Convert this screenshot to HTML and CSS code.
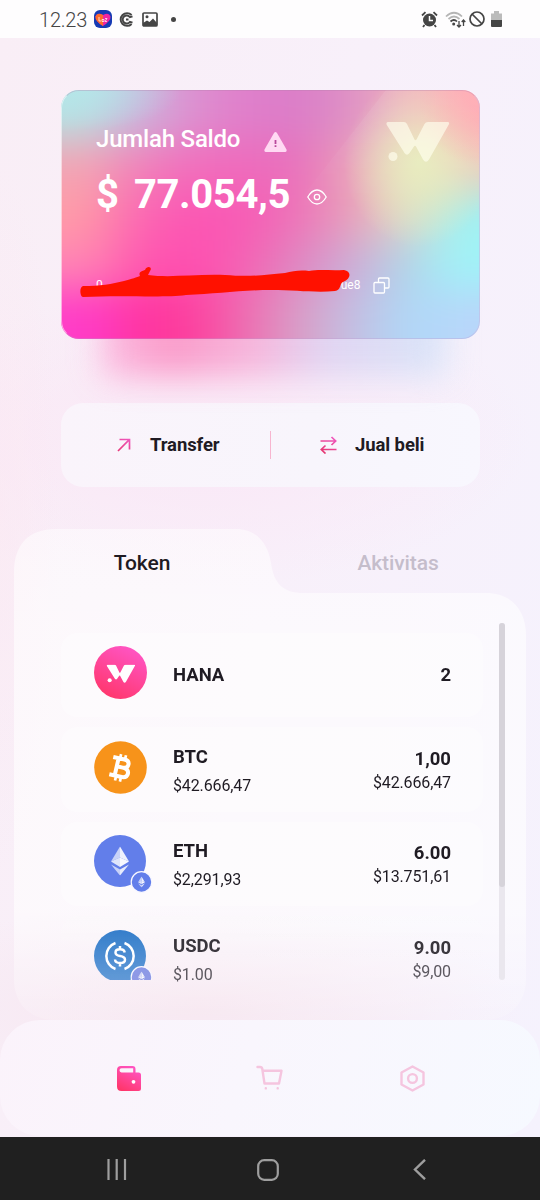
FILE: index.html
```html
<!DOCTYPE html>
<html lang="id">
<head>
<meta charset="utf-8">
<title>Wallet</title>
<link rel="stylesheet" href="styles.css">
</head>
<body>
<svg class="defs" width="0" height="0">
  <defs>
    <linearGradient id="pink" x1="0.7" y1="0" x2="0.2" y2="1"><stop offset="0" stop-color="#ff55c5"/><stop offset="1" stop-color="#ff3568"/></linearGradient>
    <linearGradient id="swap" gradientUnits="userSpaceOnUse" x1="14" y1="0" x2="4" y2="18"><stop offset="0" stop-color="#f05bc5"/><stop offset="1" stop-color="#e5336c"/></linearGradient>
    <linearGradient id="usdc" x1="0" y1="0" x2="0" y2="1"><stop offset="0" stop-color="#2f7ac9"/><stop offset="1" stop-color="#4b8dd2"/></linearGradient>
    <symbol id="mark" viewBox="0 0 64 40">
      <path d="M2.500 0H18Q20 0 21 2L28.500 17.500Q29.500 19 30.500 17.500L38.500 2Q39.500 0 42 0H61.500Q64 0 62.800 2.500L43 37.500Q40 42 37 37.500L30 24.500Q29 23 28 24.500L23.500 31Q21 34.500 18.500 31L.8 3Q-.5 0 2.500 0Z"/>
      <circle cx="7" cy="34.500" r="4.500"/>
    </symbol>
    <symbol id="ether" viewBox="0 0 18 29">
      <path fill="#fff" opacity=".65" d="M9 0V11L0 15Z"/><path fill="#fff" opacity=".9" d="M9 0V11L18 15Z"/>
      <path fill="#fff" opacity=".8" d="M9 11V20.500L0 15Z"/><path fill="#fff" opacity=".95" d="M9 11V20.500L18 15Z"/>
      <path fill="#fff" opacity=".65" d="M0 18L9 23V29Z"/><path fill="#fff" opacity=".85" d="M18 18L9 23V29Z"/>
    </symbol>
  </defs>
</svg>
<div class="phone">
  <header class="status">
    <span class="clock">12.23</span>
    <svg class="laz" width="18" height="18" viewBox="0 0 18 18"><rect width="18" height="18" rx="6" fill="#173bb4"/><path d="M9 16Q1 11 1.500 6.500Q3 2 9 5Q15 2 16.500 6.500Q17 11 9 16Z" fill="#f026a0"/><path d="M9 16Q1 11 1.500 6.500Q3 2 9 5Z" fill="#ff6a2a"/><path d="M5 7v4h2M8 9.500h2v2H8zM11 8.500h2l-2 3h2" fill="none" stroke="#fff" stroke-width=".7"/></svg>
    <svg class="cc" width="15" height="15" viewBox="0 0 15 15" fill="none" stroke="#454545" stroke-width="1.900"><path d="M13.500 4.300L11 5.200A4 4 0 1 0 11 9.800L13.500 10.700M12.600 3A6.400 6.400 0 1 0 12.600 12M7 7.500H9.500"/></svg>
    <svg class="pic" width="16" height="15" viewBox="0 0 16 15"><rect x="1" y="1" width="14" height="13" rx="1" fill="none" stroke="#454545" stroke-width="1.700"/><path d="M1 11L5 8.500L7.500 10L11 6.500L15 11V14H1Z" fill="#454545"/><circle cx="5" cy="4.800" r="1.500" fill="#454545"/></svg>
    <i class="dot"></i>
    <span class="spacer"></span>
    <svg width="17" height="17" viewBox="0 0 17 17"><circle cx="8.500" cy="9" r="6.500" fill="#454545"/><path d="M1 4.500L4.500 1.200M16 4.500L12.500 1.200M3.500 14L2 16M13.500 14L15 16" stroke="#454545" stroke-width="1.800"/><path d="M8.500 5V9.500H12" fill="none" stroke="#fff" stroke-width="1.500"/></svg>
    <svg class="wifi" width="21" height="17" viewBox="0 0 21 17" fill="none"><path d="M1 5.500Q9 -2 17 5.500M3.500 8Q9 3 14.500 8" stroke="#b5b5b5" stroke-width="1.700"/><path d="M5.500 10.500Q9 7.500 12 10.500" stroke="#454545" stroke-width="1.700"/><circle cx="8.700" cy="13" r="1.500" fill="#454545"/><path d="M14 10V16M12 14L14 16L16 14M18.500 15V9M16.700 11L18.500 9L20.300 11" stroke="#454545" stroke-width="1.300"/></svg>
    <svg class="block" width="16" height="16" viewBox="0 0 16 16" fill="none" stroke="#454545" stroke-width="1.700"><circle cx="8" cy="8" r="7"/><path d="M3 3L13 13"/></svg>
    <svg class="batt" width="11" height="17" viewBox="0 0 11 17"><path d="M0 2.500H3V0H8V2.500H11V9H0Z" fill="#bbb"/><path d="M0 9H11V15Q11 16 10 16H1Q0 16 0 15Z" fill="#454545"/></svg>
  </header>

  <main class="app">
    <section class="card-wrap">
      <div class="card-glow"></div>
      <div class="card">
        <div class="mesh"></div>
        <div class="tint"></div>
        <div class="shine"></div>
        <div class="card-body">
          <div class="card-head">
            <span class="label">Jumlah Saldo</span>
            <svg class="warn" width="23" height="20" viewBox="0 0 23 20"><path d="M10 1Q11.500 -1 13 1L22.500 17.500Q23 20 21 20H2Q0 20 .5 17.500Z" fill="#ffd9f3"/><path d="M11.500 8V12M11.500 13.300V15" stroke="#b8489c" stroke-width="1.800"/></svg>
            <svg class="brand" width="64" height="40"><use href="#mark"/></svg>
          </div>
          <div class="amount"><span class="cur">$</span><span class="num">77.054,5</span>
            <svg width="20" height="16" viewBox="0 0 20 16" fill="none" stroke="#fff" stroke-width="1.300"><path d="M.8 8Q4.800 1 10 1T19.200 8Q15.200 15 10 15T.8 8Z"/><circle cx="10" cy="8" r="2.700"/></svg>
          </div>
          <div class="address"><span>0</span><span class="tail">ue8</span>
            <svg width="17" height="17" viewBox="0 0 17 17" fill="none" stroke="#fff" stroke-width="1.300"><path d="M5.500 5.500V2Q5.500 1 6.500 1H15Q16 1 16 2V10Q16 11 15 11H11.500"/><rect x="1" y="5.500" width="10.500" height="10.500" rx="1"/></svg>
          </div>
        </div>
        <svg class="scribble" width="272" height="34" viewBox="0 0 272 34"><path fill="#ff1100" d="M3 20C20 20 32 18 44 15C52 13 57 11 60 10C58 6 62 5 65 4C67-1 73 1 70 5L68 9C90 12 115 8 145 9C170 11 185 9 205 7C213 5 220 4 229 5C240 3 250 5 264 4C271 5 272 12 263 16C260 16 261 25 255 25C236 27 216 24 191 24C161 24 136 28 106 29C84 32 44 29 3 31C0 31-1 21 3 20Z"/></svg>
      </div>
    </section>

    <section class="actions">
      <div class="action transfer">
        <svg width="14" height="14" viewBox="0 0 14 14" fill="none" stroke="url(#swap)" stroke-width="1.700"><path d="M1 13L12.300 1.700M2.500 1.500H12.500V11.500"/></svg>
        <span>Transfer</span>
      </div>
      <i class="divider"></i>
      <div class="action trade">
        <svg width="17" height="18" viewBox="0 0 17 18" fill="none" stroke="url(#swap)" stroke-width="1.700"><path d="M.5 5H15.500M11.500 1L15.700 5L11.500 9M16.500 13.500H1.500M5.500 9.500L1.300 13.500L5.500 17.500"/></svg>
        <span>Jual beli</span>
      </div>
    </section>

    <section class="panel">
      <svg class="panel-bg" width="512" height="491" viewBox="0 0 512 491">
        <defs><linearGradient id="pg" x1="0" y1="0" x2="0" y2="1"><stop offset="0" stop-color="#fff" stop-opacity=".5"/><stop offset=".2" stop-color="#fff" stop-opacity=".6"/><stop offset=".78" stop-color="#fff" stop-opacity=".6"/><stop offset="1" stop-color="#fff" stop-opacity=".12"/></linearGradient></defs>
        <path fill="url(#pg)" d="M0 44C0 16 14 0 42 0H222C242 0 254 14 257 34C260 54 268 64 290 64H472C498 64 512 82 512 106V450C512 475 495 491 470 491H42C16 491 0 475 0 450Z"/>
      </svg>
      <nav class="tabs"><span class="tab on">Token</span><span class="tab">Aktivitas</span></nav>
      <div class="list-area">
        <div class="list">
          <article class="row">
            <div class="coin"><svg width="53" height="53" viewBox="0 0 53 53"><circle cx="26.500" cy="26.500" r="26.500" fill="url(#pink)"/><use href="#mark" x="12.500" y="18.500" width="29" height="18.500" fill="#fff"/></svg></div>
            <div class="info single"><b>HANA</b></div>
            <div class="hold single"><b>2</b></div>
          </article>
          <article class="row">
            <div class="coin"><svg width="53" height="53" viewBox="0 0 53 53"><circle cx="26.500" cy="26.500" r="26.300" fill="#f7931a"/><g transform="rotate(13 27 27)" fill="none" stroke="#fff"><path stroke-width="4" d="M17 18H28.500Q33.500 18 33.500 22Q33.500 26.300 28.500 26.300H22.500M28.500 26.300Q35 26.300 35 31Q35 35.700 28.500 35.700H17M22.500 18V35.700"/><path stroke-width="2.700" d="M24 13.500V18M29 13.500V18M24 35.500V40.500M29 35.500V40.500"/></g></svg></div>
            <div class="info"><b>BTC</b><span>$42.666,47</span></div>
            <div class="hold"><b>1,00</b><span>$42.666,47</span></div>
          </article>
          <article class="row">
            <div class="coin"><svg width="58" height="58" viewBox="0 0 58 58"><circle cx="26" cy="26" r="26" fill="#627eea"/><use href="#ether" x="17" y="11.500" width="18" height="29"/><circle cx="47.500" cy="47" r="10.300" fill="#627eea" stroke="#f8f7ff" stroke-width="1.200"/><use href="#ether" x="44" y="41.500" width="7" height="11"/></svg></div>
            <div class="info"><b>ETH</b><span>$2,291,93</span></div>
            <div class="hold"><b>6.00</b><span>$13.751,61</span></div>
          </article>
          <article class="row last">
            <div class="coin"><svg width="58" height="50" viewBox="0 0 58 50"><circle cx="26" cy="26" r="26" fill="url(#usdc)"/><g fill="none" stroke="#fff" stroke-width="2.500"><path d="M21.500 13A13.800 13.800 0 0 0 21.500 39M30.500 13A13.800 13.800 0 0 1 30.500 39"/><path d="M30.700 22.500Q30.300 19.300 26 19.300Q21.500 19.300 21.500 22.500Q21.500 25.300 26 26Q31 26.700 31 29.700Q31 33 26 33Q21.300 33 21 29.500M26 16V19.500M26 33V36.500"/></g><circle cx="47.500" cy="47" r="10.300" fill="#7f8de4" stroke="#f8f7ff" stroke-width="1.200"/><use href="#ether" x="44" y="41.500" width="7" height="11"/></svg></div>
            <div class="info"><b>USDC</b><span>$1.00</span></div>
            <div class="hold"><b>9.00</b><span>$9,00</span></div>
          </article>
        </div>
        <div class="scroll"><i></i></div>
      </div>
    </section>

    <nav class="bottom">
      <svg width="24" height="25" viewBox="0 0 24 25"><path fill="url(#pink)" fill-rule="evenodd" d="M4 0H15.500Q18.500 0 18.500 3V6.500H21.500Q24 6.500 24 9V22.500Q24 25 21.500 25H4.500Q0 25 0 20.500V4Q0 0 4 0ZM4.500 2.200Q2.500 2.200 2.500 4.300T4.500 6.500H16.200V2.200Z"/><circle cx="16.500" cy="15.800" r="1.900" fill="#fff"/></svg>
      <svg width="27" height="26" viewBox="0 0 27 26" fill="none" stroke="#f5c5df" stroke-width="2.400" stroke-linejoin="round" stroke-linecap="round"><path d="M1.500 2H4Q6 2 6.300 4L8.500 18.500H23L25.500 5.700H7"/><path d="M9.800 23.300V23.400M21.700 23.300V23.400"/></svg>
      <svg width="25" height="27" viewBox="0 0 25 27" fill="none" stroke="#f5c5df" stroke-width="2.400" stroke-linejoin="round"><path d="M12.500 1.500L23.500 7.500V19.500L12.500 25.500L1.500 19.500V7.500Z"/><circle cx="12.500" cy="13.500" r="4.400"/></svg>
    </nav>
  </main>

  <footer class="system">
    <svg width="20" height="21" viewBox="0 0 20 21" stroke="#9e9e9e" stroke-width="2.200"><path d="M1.500 0V21M9.700 0V21M18 0V21"/></svg>
    <svg width="22" height="22" viewBox="0 0 22 22" fill="none" stroke="#9e9e9e" stroke-width="2.200"><rect x="1.200" y="1.200" width="19.600" height="19.600" rx="6"/></svg>
    <svg width="13" height="21" viewBox="0 0 13 21" fill="none" stroke="#9e9e9e" stroke-width="2.400"><path d="M12 .8L2 10.500L12 20.200"/></svg>
  </footer>
</div>
</body>
</html>
```
FILE: styles.css
```css
* { box-sizing: border-box; }
body { margin: 0; font-family: Roboto, "Liberation Sans", sans-serif; color: #1f1b23; }
svg { display: block; flex: none; }
.defs { position: absolute; }
.phone { width: 540px; height: 1200px; display: flex; flex-direction: column; overflow: hidden; }

.status { height: 38px; background: #fefdfe; display: flex; align-items: center; padding: 0 38px 0 39px; flex: none; color: #454545; }
.clock { font-size: 20px; width: 55px; letter-spacing: -.2px; font-weight: 350; padding-top: 1px; }
.cc { margin-left: 7px; }
.pic { margin-left: 8px; }
.dot { width: 5px; height: 5px; border-radius: 50%; background: #454545; margin-left: 13px; }
.spacer { flex: 1; }
.wifi { margin-left: 7px; }
.block { margin-left: 3px; }
.batt { margin-left: 6px; }

.app {
  height: 1099px; flex: none; display: flex; flex-direction: column; padding-top: 52px;
  background:
    radial-gradient(ellipse 60px 350px at 0 480px, #fce7f180, #fce7f100),
    radial-gradient(ellipse 320px 110px at 200px 970px, #f6e5ef, #f6e5ef00),
    radial-gradient(ellipse 330px 150px at 200px 400px, #fae7f6, #fae7f600),
    linear-gradient(100deg, #f9eef6 0%, #f8f0fa 50%, #f5f2fd 100%);
}

.card-wrap { position: relative; width: 419px; height: 249px; margin-left: 61px; flex: none; }
.card-glow {
  position: absolute; left: 40px; right: 34px; top: 195px; height: 92px; filter: blur(16px); opacity: .75;
  background: linear-gradient(90deg, #fcb0dc, #fb80ba 20%, #f5a5d3 45%, #d9cdf0 65%, #cfe2f8);
}
.card { position: relative; width: 100%; height: 100%; border-radius: 18px; overflow: hidden; }
.card::after { content: ""; position: absolute; inset: 0; border-radius: 18px; border: 1.5px solid; border-color: #b580ad55 #c9b6df88 #bd9bd055 #ffffff88; }
/* Five horizontal colour bands, blurred into one another. */
.mesh {
  position: absolute; inset: -50px; filter: blur(20px);
  background:
    linear-gradient(90deg, #b5e2e4 76px, #cab5dd 128px, #dd90d0 180px, #e07fcb 232px, #db7cc8 284px, #dd8fc6 336px, #f0b6bb 400px, #ffa9b2 455px) 0 0 / 100% 100px no-repeat,
    linear-gradient(90deg, #f2a5b5 76px, #f082b9 128px, #f26fbd 180px, #ef6bbb 232px, #e86fbd 284px, #eaa0b8 340px, #eae8bc 410px, #efc8bb 455px) 0 100px / 100% 50px no-repeat,
    linear-gradient(90deg, #ff9ca6 70px, #fb68b2 128px, #fc56b3 180px, #f85ab5 232px, #ee72b8 284px, #e89fbb 340px, #e2d8c3 392px, #a0f1f2 452px) 0 150px / 100% 50px no-repeat,
    linear-gradient(90deg, #ff84b4 76px, #ff58b0 128px, #ff4db0 180px, #f562b3 232px, #e085c0 284px, #cfaad6 336px, #b6cfe6 388px, #a0f3f8 445px) 0 200px / 100% 50px no-repeat,
    linear-gradient(90deg, #ff3cc8 76px, #ff339b 140px, #fb45a0 190px, #ec74b4 240px, #d8a0c8 290px, #c4bfe2 340px, #afd9f8 400px, #b9d6fa 455px) 0 250px / 100% 99px no-repeat;
}
.tint { position: absolute; inset: 0; background: radial-gradient(ellipse 100px 40px at 20px 0, #b5e8eab0, #b5e8ea00), radial-gradient(ellipse 60px 60px at 419px 15px, #ffa9b2a0, #ffa9b200), radial-gradient(ellipse 75px 85px at 358px 72px, #e8efbee0, #e8e8be00); }
.shine { position: absolute; inset: 0; background: #ffffff14; clip-path: polygon(325px 0, 419px 0, 419px 249px, 130px 249px); -webkit-mask-image: linear-gradient(#000, transparent 50%); mask-image: linear-gradient(#000, transparent 50%); }
.card-body { position: relative; display: flex; flex-direction: column; padding: 31px 30px 0 35px; color: #fff; }
.card-head { display: flex; height: 40px; align-items: flex-start; }
.label { font-size: 24px; line-height: 37px; width: 168px; font-weight: 500; letter-spacing: -.2px; white-space: nowrap; }
.warn { margin-top: 11px; }
.brand { margin-left: auto; fill: #ffffeea8; margin-top: 1px; }
.amount { display: flex; align-items: center; height: 64px; font-size: 40px; font-weight: 700; }
.cur, .num { line-height: 60px; padding-top: 4px; }
.cur { width: 38px; }
.num { width: 173px; white-space: nowrap; letter-spacing: -.4px; }
.amount svg { margin-top: 7px; }
.address { display: flex; align-items: center; height: 20px; margin-top: 50px; font-size: 12px; }
.tail { margin-left: 238px; width: 32px; }
.address svg { margin-top: 1px; }
.scribble { position: absolute; left: 19px; top: 176px; }

.actions { width: 419px; height: 84px; border-radius: 22px; margin: 64px 0 0 61px; background: linear-gradient(90deg, #faf4fb, #f8f5fc 60%, #f8f7fe); display: flex; align-items: center; flex: none; font-size: 18.500px; font-weight: 700; letter-spacing: -.1px; }
.action { display: flex; align-items: center; white-space: nowrap; }
.transfer { width: 209px; padding-left: 56px; gap: 19px; }
.divider { width: 1px; height: 28px; background: #f7b5cf; }
.trade { padding-left: 49px; gap: 18px; }

.panel { position: relative; width: 512px; height: 491px; margin: 42px 0 0 14px; flex: none; }
.panel-bg { position: absolute; inset: 0; }
.tabs { position: relative; height: 64px; display: flex; font-size: 21px; line-height: 69px; font-weight: 500; letter-spacing: -.1px; color: #c5bdcb; text-align: center; }
.tab { width: 256px; }
.tab.on { color: #1f1b23; }
.list-area { position: relative; display: flex; height: 390px; padding-left: 47px; }
.list { width: 422px; padding-top: 39.500px; display: flex; flex-direction: column; gap: 10px; overflow: hidden; -webkit-mask-image: linear-gradient(#000 83%, #000000dd 100%); mask-image: linear-gradient(#000 83%, #000000dd 100%); }
.row { height: 84.500px; border-radius: 16px; flex: none; background: #ffffff55; display: flex; padding: 0 32px 0 33px; }
.row.last { background: linear-gradient(#ffffff30, #ffffff00 60%); }
.coin { width: 79px; padding-top: 13.500px; }
.info, .hold { display: flex; flex-direction: column; justify-content: center; }
.info { padding-top: 4px; gap: 13px; }
.hold { margin-left: auto; text-align: right; gap: 8px; padding-top: 3px; }
.single { padding-top: 1px; }
.row b { font-size: 18.500px; line-height: 16px; font-weight: 700; }
.row span { font-size: 16px; line-height: 16px; letter-spacing: -.12px; }
.row.last b { color: #2d2930; }
.row.last span { color: #48444c; }
.scroll { width: 6px; height: 357px; margin: 29.500px 0 0 16px; background: #eae7ee; border-radius: 3px; }
.scroll i { display: block; height: 264px; border-radius: 3px; background: #d6d3da; }

.bottom { height: 116px; border-radius: 40px; flex: none; background: linear-gradient(105deg, #fbf3fb, #f9f6fd 45%, #f6f9ff); display: grid; grid-template-columns: 256px 144px auto; align-items: center; }
.bottom svg:first-child { margin-left: 117px; }

.system { flex: none; height: 63px; background: #202020; display: grid; grid-template-columns: 150px 156px auto; padding: 2px 0 0 107px; align-items: center; }
```
